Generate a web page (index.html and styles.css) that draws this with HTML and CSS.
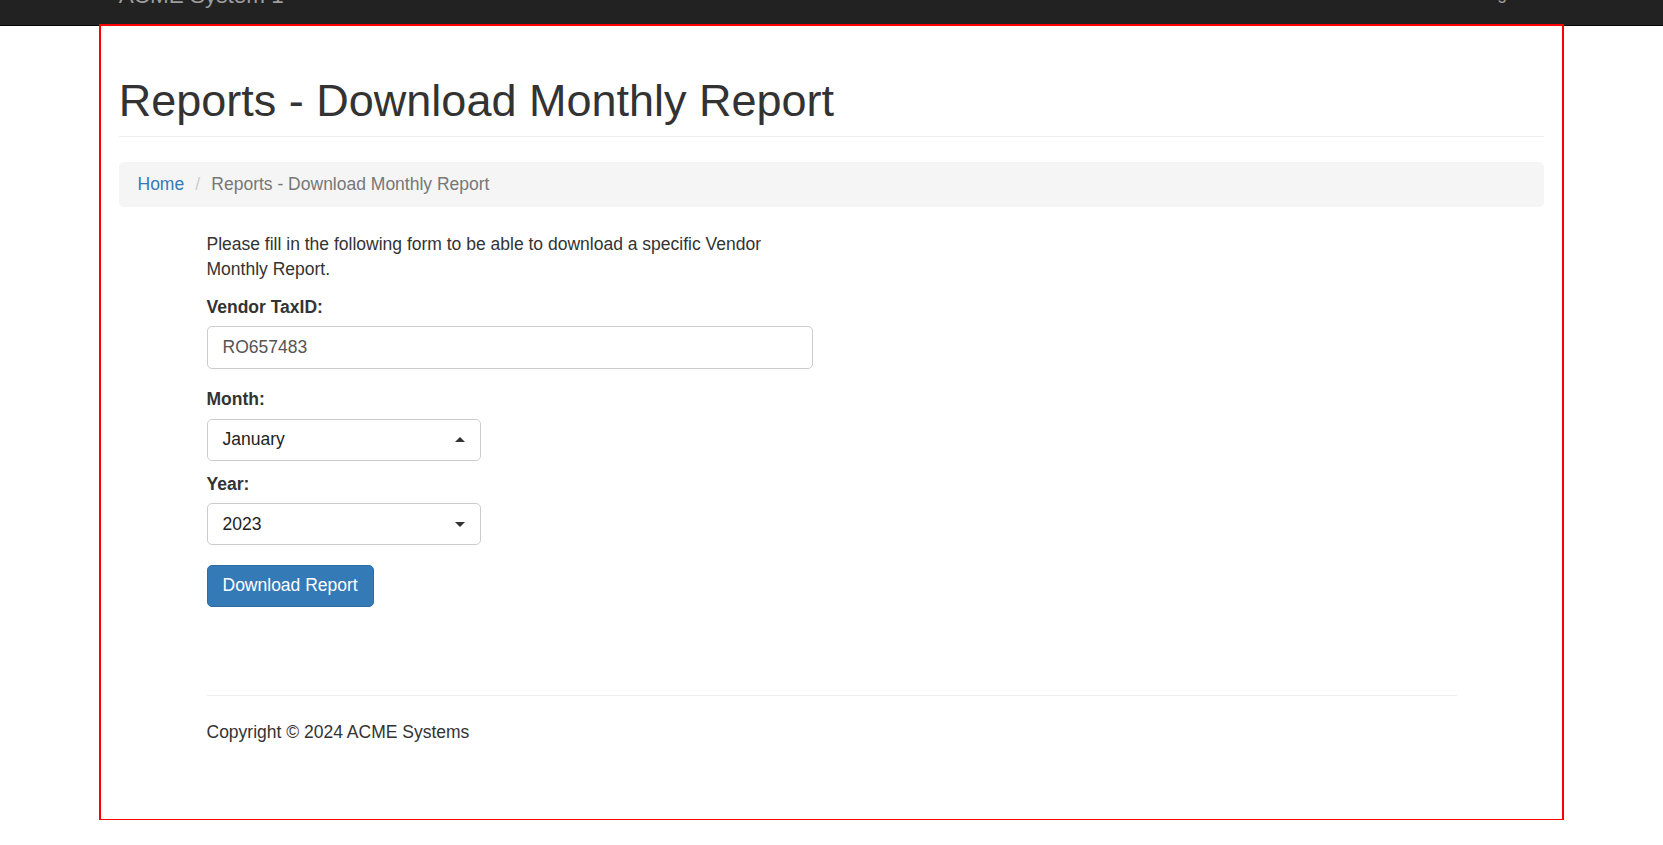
FILE: index.html
```html
<!DOCTYPE html>
<html lang="en">
<head>
<meta charset="utf-8">
<title>Reports - Download Monthly Report</title>
<link rel="stylesheet" href="styles.css">
</head>
<body>
<nav class="navbar">
  <div class="nav-inner">
    <a class="brand" href="#">ACME System 1</a>
    <ul class="nav-right">
      <li><a href="#">Log out</a></li>
    </ul>
  </div>
</nav>
<div class="page">
  <h1 class="page-header">Reports - Download Monthly Report</h1>
  <ol class="breadcrumb">
    <li><a href="#">Home</a></li>
    <li class="active">Reports - Download Monthly Report</li>
  </ol>
  <div class="inner">
    <form class="report-form">
      <p class="intro">Please fill in the following form to be able to download a specific Vendor Monthly Report.</p>
      <div class="form-group">
        <label class="label">Vendor TaxID:</label>
        <div class="input">RO657483</div>
      </div>
      <div class="form-group tight">
        <label class="label">Month:</label>
        <div class="select">
          <span>January</span>
          <svg class="caret" width="10" height="5" viewBox="0 0 10 5"><path d="M0 5 L5 0 L10 5 Z" fill="#333"/></svg>
        </div>
      </div>
      <div class="form-group">
        <label class="label">Year:</label>
        <div class="select">
          <span>2023</span>
          <svg class="caret" width="10" height="5" viewBox="0 0 10 5"><path d="M0 0 L10 0 L5 5 Z" fill="#333"/></svg>
        </div>
      </div>
      <button type="button" class="btn">Download Report</button>
    </form>
    <footer class="footer">
      <hr class="footer-rule">
      <p class="copy">Copyright &copy; 2024 ACME Systems</p>
    </footer>
  </div>
</div>
</body>
</html>
```

FILE: styles.css
```css
* {
  box-sizing: border-box;
}

html, body {
  margin: 0;
  padding: 0;
}

body {
  font-family: "Liberation Sans", Arial, Helvetica, sans-serif;
  font-size: 17.5px;
  line-height: 25px;
  color: #333;
  background: #fff;
}

a {
  text-decoration: none;
}

/* navbar (page scrolled so only its lower part is visible) */
.navbar {
  margin-top: -36px;
  height: 62px;
  background: #222;
  border-bottom: 1px solid #080808;
  overflow: hidden;
}

.nav-inner {
  width: 1463px;
  margin: 0 auto;
  padding: 0 18.75px;
  display: flex;
  justify-content: space-between;
}

.brand {
  display: block;
  padding-top: 18.75px;
  font-size: 22.5px;
  line-height: 25px;
  color: #9d9d9d;
}

.nav-right {
  list-style: none;
  margin: 0;
  padding: 0 8px 0 0;
  display: flex;
}

.nav-right a {
  display: block;
  padding-top: 16.5px;
  line-height: 25px;
  color: #9d9d9d;
}

/* main container */
.page {
  width: 1463px;
  margin: -1px auto 0;
  padding: 50.5px 18.75px 62px;
  outline: 2px solid #ff0000;
  outline-offset: -1px;
}

.page-header {
  margin: 0 0 25px;
  padding-bottom: 11.25px;
  border-bottom: 1.25px solid #eee;
  font-size: 45px;
  line-height: 49.5px;
  font-weight: 500;
  color: #333;
}

.breadcrumb {
  list-style: none;
  margin: 0 0 25px;
  padding: 10px 18.75px;
  background: #f5f5f5;
  border-radius: 5px;
}

.breadcrumb li {
  display: inline-block;
}

.breadcrumb li + li::before {
  content: "/\00a0";
  padding: 0 6.25px;
  color: #ccc;
}

.breadcrumb a {
  color: #337ab7;
}

.breadcrumb .active {
  color: #777;
}

.inner {
  width: 1250px;
  margin: 0 auto;
}

.report-form {
  width: 606px;
  display: flex;
  flex-direction: column;
  align-items: flex-start;
}

.intro {
  margin: 0 0 12.5px;
}

.form-group {
  align-self: stretch;
  margin-bottom: 18.75px;
}

.form-group.tight {
  margin-bottom: 11.5px;
}

.label {
  display: block;
  margin-bottom: 6.25px;
  font-weight: 700;
}

.input {
  height: 42.5px;
  padding: 7.5px 15px;
  border: 1.25px solid #ccc;
  border-radius: 5px;
  color: #555;
  background: #fff;
}

.select {
  width: 274.5px;
  height: 42px;
  padding: 7.5px 15px;
  border: 1.25px solid #ccc;
  border-radius: 5px;
  color: #222;
  background: #fff;
  display: flex;
  align-items: center;
  justify-content: space-between;
}

.caret {
  display: block;
  flex: none;
}

.btn {
  margin-top: 0.75px;
  height: 42px;
  padding: 7.5px 15px;
  border: 1.25px solid #2e6da4;
  border-radius: 5px;
  background: #337ab7;
  color: #fff;
  font-family: inherit;
  font-size: 17.5px;
  line-height: 25px;
}

.footer-rule {
  margin: 88.25px 0 24px;
  border: 0;
  border-top: 1.25px solid #eee;
  height: 0;
}

.copy {
  margin: 0 0 12.5px;
}
```
